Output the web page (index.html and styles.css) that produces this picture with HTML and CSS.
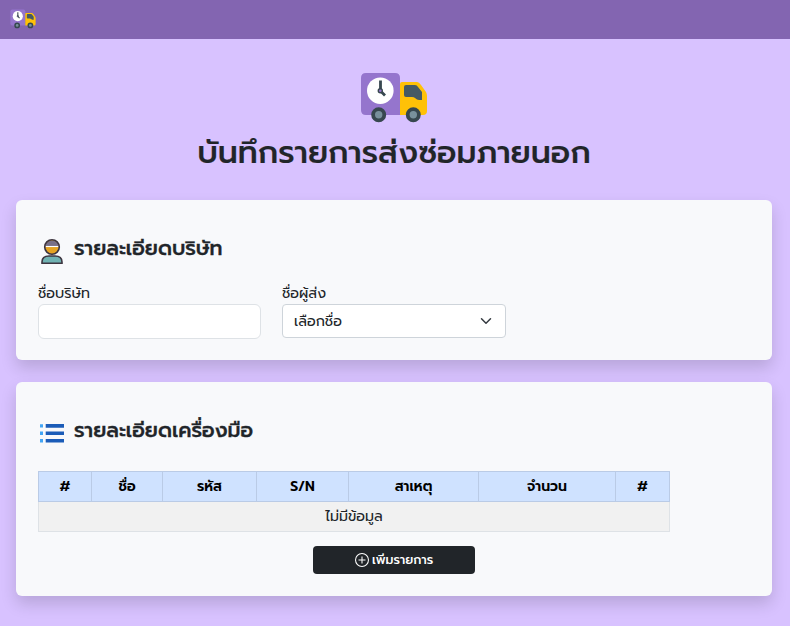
FILE: index.html
```html
<!DOCTYPE html>
<html lang="th">
<head>
<meta charset="utf-8">
<title>บันทึกรายการส่งซ่อมภายนอก</title>
<link rel="stylesheet" href="styles.css">
</head>
<body>
<svg class="defs" aria-hidden="true">
  <symbol id="truck" viewBox="0 0 68 52">
    <path fill="#9575cd" d="M40 43H6Q1 43 1 38V6Q1 1 6 1H35Q40 1 40 6Z"/>
    <path fill="#ffc107" d="M40 43V12Q40 10 42 10H57Q59 10 61 13L66 20Q67 22 67 24V39Q67 43 63 43Z"/>
    <path fill="#455a64" d="M46 13H55Q57 13 58 15L62 20V28H59Q57 28 55 26Q54 25 52 25H46Q44 25 44 23V15Q44 13 46 13Z"/>
    <circle cx="20.3" cy="18.7" r="13.3" fill="#fff"/>
    <path d="M20.5 8.500V19L25 23.500" fill="none" stroke="#37474f" stroke-width="2.800"/>
    <circle cx="20.3" cy="18.7" r="2.700" fill="#37474f"/>
    <circle cx="20.3" cy="18.7" r="1.300" fill="#9575cd"/>
    <g fill="#78909c" stroke="#37474f" stroke-width="3.800"><circle cx="18.7" cy="42.700" r="5.600"/><circle cx="53.300" cy="42.700" r="5.600"/></g>
  </symbol>
</svg>
<header class="navbar"><svg class="brand"><use href="#truck"/></svg></header>
<main class="page">
  <div class="hero">
    <svg class="hero-icon"><use href="#truck"/></svg>
    <h1>บันทึกรายการส่งซ่อมภายนอก</h1>
  </div>
  <section class="card company">
    <h2>
      <svg class="icon" viewBox="0 0 28 28"><circle cx="14" cy="10" r="7.300" fill="#e5a323"/><path d="M6.800 9.500A7.300 7.300 0 0 1 21.200 9.500Z" fill="#787087"/><path d="M7.500 9.500H20.500" stroke="#fff" stroke-width="1.100"/><circle cx="14" cy="10" r="7.300" fill="none" stroke="#3d3540" stroke-width="1.600"/><path d="M4 26.300V25Q4 19 11 19H17Q24 19 24 25V26.300Z" fill="#70b2b2" stroke="#3d3540" stroke-width="1.600"/></svg>
      <span>รายละเอียดบริษัท</span>
    </h2>
    <div class="fields">
      <div class="field"><label for="company">ชื่อบริษัท</label><input id="company" type="text"></div>
      <div class="field"><span class="label">ชื่อผู้ส่ง</span>
        <div class="select"><span>เลือกชื่อ</span><svg viewBox="0 0 16 16"><path d="m2 5 6 6 6-6" fill="none" stroke="#343a40" stroke-width="2" stroke-linecap="round" stroke-linejoin="round"/></svg></div>
      </div>
    </div>
  </section>
  <section class="card tools">
    <h2>
      <svg class="icon" viewBox="0 0 28 28"><path fill="#42a5f5" d="M2 4.200h3v3.400H2zM2 11.600h3v3.400H2zM2 19h3v3.400H2z"/><path stroke="#1b5cb8" stroke-width="3.600" stroke-linejoin="round" d="M7.700 5.900H26M7.700 13.300H26M7.700 20.700H26"/></svg>
      <span>รายละเอียดเครื่องมือ</span>
    </h2>
    <table>
      <colgroup><col class="c1"><col class="c2"><col class="c3"><col class="c4"><col class="c5"><col class="c6"><col class="c7"></colgroup>
      <thead><tr><th>#</th><th>ชื่อ</th><th>รหัส</th><th>S/N</th><th>สาเหตุ</th><th>จำนวน</th><th>#</th></tr></thead>
      <tbody><tr><td colspan="7">ไม่มีข้อมูล</td></tr></tbody>
    </table>
    <button type="button"><svg viewBox="0 0 16 16" fill="none" stroke="#fff"><circle cx="8" cy="8" r="7.400" stroke-width="1.200"/><path d="M8 4V12M4 8H12" stroke-width="1.200"/></svg><span>เพิ่มรายการ</span></button>
  </section>
</main>
</body>
</html>
```
FILE: styles.css
```css
* { box-sizing: border-box; }
body { margin: 0; height: 626px; overflow: hidden; background: #d8c2ff; color: #212529; font: 14.3px/21px Prompt, Kanit, "Noto Sans Thai", "Noto Sans Thai UI", "Noto Sans", sans-serif; }
.defs { position: absolute; width: 0; height: 0; }
.navbar { height: 39px; background: #8365b1; padding: 9px 10px; }
.brand { display: block; width: 26px; height: 20px; }
.page { padding: 33px 18px 0 16px; }
.hero { height: 128px; display: flex; flex-direction: column; align-items: center; }
.hero-icon { width: 68px; height: 52px; flex: none; }
h1 { margin: 7px 0 0; font-size: 31.5px; line-height: 44px; font-weight: 500; white-space: nowrap; -webkit-text-stroke: .2px; }
.card { background: #f8f9fb; border-radius: 6px; padding: 34px 22px 0; box-shadow: 0 8px 16px rgba(0,0,0,.15); }
.company { height: 160px; }
.tools { height: 214px; margin-top: 22px; }
h2 { display: flex; align-items: center; gap: 8px; height: 32px; margin: 0; font-size: 20.45px; line-height: 28px; font-weight: 500; white-space: nowrap; -webkit-text-stroke: .35px; }
.icon { width: 28px; height: 28px; flex: none; }
.company .icon { margin-top: 2px; }
.tools .icon { margin-top: 4px; }
h2 span { margin-top: -3px; }
.fields { display: grid; grid-template-columns: 223px 224px; gap: 21px; margin-top: 17px; }
label, .label { display: block; height: 21px; white-space: nowrap; }
input { display: block; width: 100%; height: 35px; border: 1px solid #dee2e6; border-radius: 6px; background: #fff; }
.select { height: 34px; display: flex; align-items: center; justify-content: space-between; padding: 0 13px 0 11px; border: 1px solid #ced4da; border-radius: 4px; background: #fff; }
.select svg { width: 12px; height: 12px; }
table { width: 632px; margin-top: 23px; border-collapse: collapse; table-layout: fixed; text-align: center; }
.c1 { width: 53px; } .c2 { width: 71px; } .c3 { width: 94px; } .c4 { width: 92px; } .c5 { width: 130px; } .c6 { width: 137px; } .c7 { width: 54px; }
th, td { height: 30px; padding: 0; line-height: 20px; white-space: nowrap; }
th { background: #cfe2ff; border: 1px solid #bacbe6; color: #000; font-size: 14px; font-weight: 600; }
td { background: #f1f1f1; border: 1px solid #dee2e6; padding-bottom: 2px; }
button { display: flex; align-items: center; justify-content: center; gap: 3px; width: 162px; height: 28px; margin: 14px 0 0 275px; padding: 0 0 1px; border: 0; border-radius: 4px; background: #212529; color: #fff; font: 500 12.5px/18px Prompt, Kanit, "Noto Sans Thai", "Noto Sans Thai UI", "Noto Sans", sans-serif; }
button svg { width: 14px; height: 14px; }
```
